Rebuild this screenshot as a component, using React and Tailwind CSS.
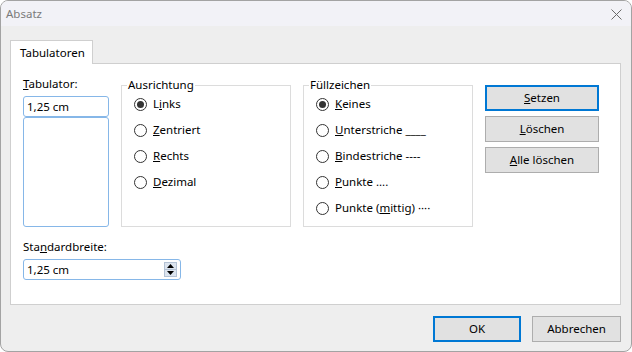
import React from "react";

const Radio = ({ checked, children }) => (
  <div className="flex h-[26px] items-center">
    <span className="flex h-[13px] w-[13px] items-center justify-center rounded-full border border-[#333333] bg-white">
      {checked && <span className="h-[7px] w-[7px] rounded-full bg-[#333333]" />}
    </span>
    <span className="ml-[6px]">{children}</span>
  </div>
);

const Group = ({ title, children }) => (
  <div className="relative mt-[9px] h-[142px] w-[170px] border border-[#dcdcdc] pl-[12px] pt-[5px]">
    <span className="absolute -top-[9px] left-[5px] bg-white px-[1px] leading-[16px]">{title}</span>
    {children}
  </div>
);

const Button = ({ focused, className = "", children }) => (
  <button
    className={
      "flex items-center justify-center bg-[#e1e1e1] leading-[16px] " +
      (focused ? "border-2 border-[#0078d4] " : "border border-[#adadad] ") +
      className
    }
  >
    {children}
  </button>
);

export default function App() {
  return (
    <div
      className="flex h-[352px] w-[632px] flex-col overflow-hidden rounded-[8px] border border-[#a3a3a3] bg-[#eeeeee] text-[11.5px] text-black"
      style={{ fontFamily: '"Noto Sans", "Open Sans", sans-serif' }}
    >
      {/* title bar */}
      <div className="flex h-[25px] shrink-0 items-center justify-between bg-[#f2f2f7] pl-[5px] pr-[9px]">
        <span className="text-[#7a7a7a]">Absatz</span>
        <svg width="11" height="11" viewBox="0 0 11 11" className="mt-[1px]">
          <path d="M0.5 0.5 L10.5 10.5 M10.5 0.5 L0.5 10.5" stroke="#6b6b6b" strokeWidth="1" />
        </svg>
      </div>

      <div className="px-[9px] pt-[14px]">
        {/* tab strip */}
        <div className="relative z-10 -mb-px flex h-[24px] w-[83px] items-center border border-b-0 border-[#cfcfcf] bg-white pl-[9px]">
          Tabulatoren
        </div>

        {/* tab panel */}
        <div className="h-[242px] w-[611px] border border-[#cfcfcf] bg-white pl-[12px] pt-[12px]">
          <div className="flex items-start gap-[12px]">
            <div className="flex w-[86px] flex-col">
              <span className="leading-[16px]">
                <u>T</u>abulator:
              </span>
              <div className="mt-[4px] flex h-[21px] items-center rounded-[3px] border border-[#86b7e8] pl-[3px]">
                1,25 cm
              </div>
              <div className="h-[110px] rounded-[3px] border border-[#86b7e8]" />
            </div>

            <Group title="Ausrichtung">
              <Radio checked>
                L<u>i</u>nks
              </Radio>
              <Radio>
                <u>Z</u>entriert
              </Radio>
              <Radio>
                <u>R</u>echts
              </Radio>
              <Radio>
                <u>D</u>ezimal
              </Radio>
            </Group>

            <Group title="Füllzeichen">
              <Radio checked>
                <u>K</u>eines
              </Radio>
              <Radio>
                <u>U</u>nterstriche ____
              </Radio>
              <Radio>
                <u>B</u>indestriche ----
              </Radio>
              <Radio>
                <u>P</u>unkte ....
              </Radio>
              <Radio>
                Punkte (<u>m</u>ittig) ····
              </Radio>
            </Group>

            <div className="mt-[9px] flex w-[114px] flex-col gap-[5px]">
              <Button focused className="h-[26px]">
                <u>S</u>etzen
              </Button>
              <Button className="h-[26px]">
                <u>L</u>öschen
              </Button>
              <Button className="h-[26px]">
                <u>A</u>lle löschen
              </Button>
            </div>
          </div>

          <div className="mt-[12px] leading-[16px]">
            Sta<u>n</u>dardbreite:
          </div>
          <div className="mt-[4px] flex h-[21px] w-[158px] items-center justify-between rounded-[3px] border border-[#86b7e8] pl-[3px] pr-[3px]">
            <span>1,25 cm</span>
            <div className="flex h-[15px] w-[13px] flex-col border border-[#b4c2d4] bg-[#dce4ee]">
              <div className="flex flex-1 items-center justify-center border-b border-[#b4c2d4]">
                <svg width="7" height="4" viewBox="0 0 7 4">
                  <path d="M3.5 0 L7 4 L0 4 Z" fill="#000" />
                </svg>
              </div>
              <div className="flex flex-1 items-center justify-center">
                <svg width="7" height="4" viewBox="0 0 7 4">
                  <path d="M0 0 L7 0 L3.5 4 Z" fill="#000" />
                </svg>
              </div>
            </div>
          </div>
        </div>

        {/* dialog buttons */}
        <div className="mt-[11px] flex w-[611px] justify-end gap-[11px]">
          <Button focused className="h-[26px] w-[88px]">
            OK
          </Button>
          <Button className="h-[26px] w-[89px]">Abbrechen</Button>
        </div>
      </div>
    </div>
  );
}
